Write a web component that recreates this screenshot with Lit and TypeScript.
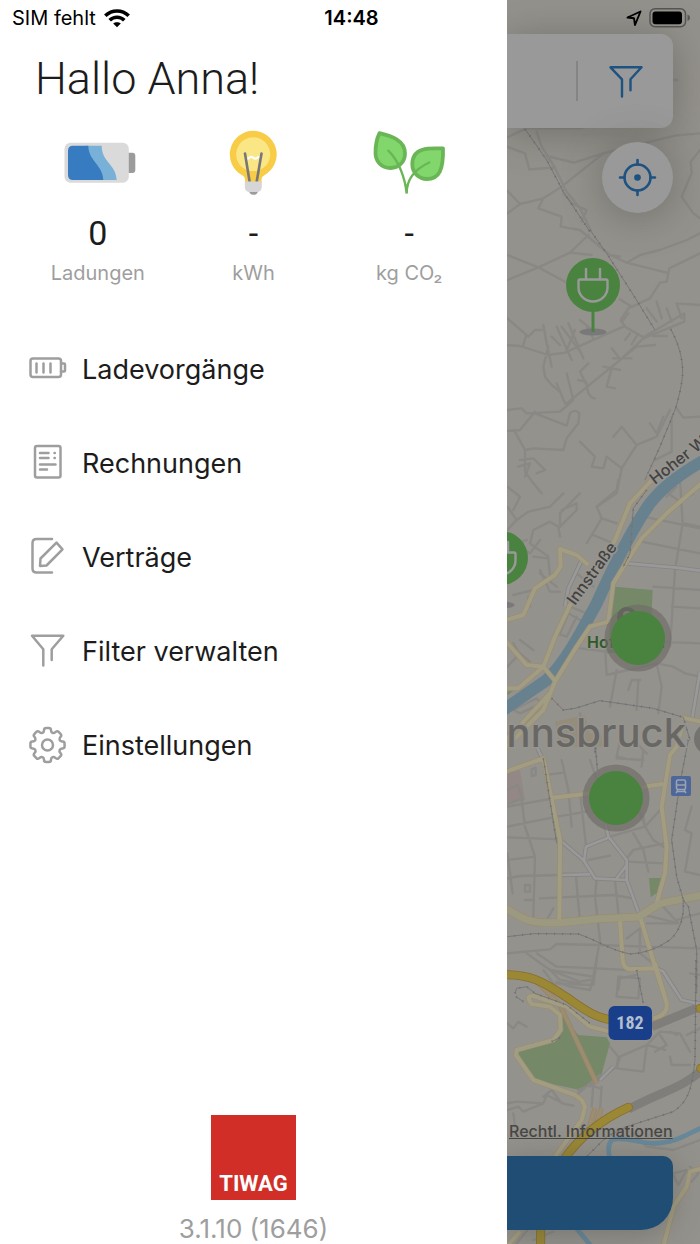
import { LitElement, html, css, svg } from "lit";
import { customElement } from "lit/decorators.js";

/* ---------- Map data: [top of sheet, path in sheet units (3 units = 1px)] ---------- */
type Line = [number, string];

const MINOR: Line[] = [
  [0, "M22,412L80,385H240L290,372M22,440L75,460L88,508L165,502L140,468L222,488L310,460L490,415L530,406L600,400M310,460L185,560L130,595L60,612L22,640M22,572L60,612M130,595L115,625L185,650L182,680L240,690M190,580L215,610L260,630L245,665M600,450L572,485L575,520L545,590L580,640L600,655M110,395L125,440L160,495L200,575L240,625L272,690M520,240h12"],
  [230, "M22,75L115,112L195,155M22,150L115,112L210,68L265,15M210,68L275,75M240,0L330,75L380,98L500,128M330,75L360,80M380,98L420,75L480,60L560,30L600,10M600,70L508,115L500,155L480,158L450,205L385,235L362,270L375,290L430,322M360,208L395,230M22,345L60,348L145,375L195,368L290,325L370,290M22,265L85,320L105,300H125M78,318L70,345M130,285L140,340L155,410M130,410L135,440L155,465L180,485M145,350L130,410M170,290L215,390M185,290L240,365M205,280L250,385M225,300L200,360M240,270L290,310M260,290L280,325M155,320L180,345"],
  [230, "M200,520L360,390L430,325L553,275V250L430,322M360,390L410,350L465,345M265,400L240,425L260,465M235,450L258,455L265,490Q275,505 285,505M335,355L355,380M340,385L395,385M310,410L360,420M335,415L320,470L345,475M22,540L65,535L80,550L180,545L220,510L200,430M195,520L170,460M105,545L60,600L22,603M105,550L200,587L210,550Q225,535 238,550L235,580L200,625L190,660L100,655L75,660L42,600M75,660V725L100,760L125,790M60,690L100,685L135,720L110,730M55,710L90,700L75,740M22,770L60,800L40,840M240,635L285,680L275,710L310,715L320,680L365,715L410,645L365,590L340,620M365,715L350,790L290,830M410,645L470,620L510,540M530,535L550,563L600,560M450,580L470,610L490,560M515,560V665L465,690M530,220L600,225M470,215l15,50M500,235l15,40M530,220l15,45M440,235l30,40M370,270l15,-20M390,310l-15,20M410,318l-15,25M460,318h40"],
  [480, "M22,80L50,120L85,95L150,80L190,40M50,120L22,150M185,90L230,70V90L180,140V100L240,40M100,150L150,125L175,140L180,170M100,150L90,190L145,230M120,180L90,220L60,200M22,200L80,180M100,230L145,235L150,290M120,270L150,335H180M120,280L170,320M100,330L40,345M85,350L90,380M260,190L305,115L350,130M305,115L290,80L350,30L355,0M280,165L340,190M230,280L280,320M180,460L205,400L240,420M210,380L260,400M170,460L200,470L230,410M40,490L70,540M60,480L100,510M22,560L60,520L90,545M425,185L600,220M540,0L548,130L525,270L510,500M430,110L600,145M460,320L600,330M515,380L600,385M480,485L600,490M315,500L320,585L470,550M350,570L330,680M385,630L395,600H420M415,600L410,690M470,550L485,620L475,700M470,550L520,560L555,580L600,590M240,505L320,515M370,230L430,110M550,130L600,140M490,30L540,65L580,40M500,50L530,20M40,690L110,655L125,670L60,700ZM240,700L250,770M22,760L60,740"],
  [740, "M22,200L160,175M22,260L170,230L260,215M22,292L180,298M22,360L105,350M22,415L60,408L180,405M65,180L75,260L105,350L100,530M22,340L38,460M185,60L205,150L215,260M150,103L190,98M240,160L258,315M350,55L430,60M360,0L350,50L375,55M270,60L290,120M430,30L425,80M400,0L440,40M22,150l30,-15l15,40l-40,15M95,88l12,-5v22l-12,3zM75,435h15v20h-15zM228,410L235,490L240,540M290,415L285,470L300,600M120,475L340,465L400,475M345,420L355,520M75,480H100M265,360L330,347M330,290L435,260L485,205M435,260L460,300L490,320M400,280L430,330L445,395M380,355L400,330L490,310M380,365L490,370M418,215L435,260M435,260L430,230M415,520L535,550L485,495M440,550H530M380,595L420,565V640L465,675M300,600L280,710L270,750M22,640L150,628L170,612L290,615L600,625M80,640L150,690L280,710M110,640L170,680L290,685L380,690M150,690L180,720L240,730M355,750L360,715L410,705M570,700L600,705M575,200L555,270L575,280L555,395L600,405M160,505L140,540M530,540L600,520"],
  [960, "M22,190L40,205L55,185L80,200M130,30L160,70L280,75M150,30L240,65L270,60M170,65L210,80L270,90M355,50L420,55L415,115L350,110ZM280,75L290,0M360,290L440,255L495,270M360,290L350,325L430,335M430,335L440,255L480,215M330,260L355,290L350,320L270,380M465,275L500,255L480,225M480,215L540,220L570,275M510,215L530,225M510,290L515,315H570M235,390L270,375L300,385M300,345L235,400M22,430L50,425L130,430L140,405L190,430M22,450L55,440L70,455L130,430M40,460L45,500M130,410L155,390L185,430L220,437M280,370L275,440M305,380L300,450M600,205L560,225M520,640l40,-10l-25,45l-15,-30M570,620l25,20l-20,25M400,520L440,560L520,570L600,540M90,800L50,850M100,840l60,-25"],
];

const WHITE: Line[] = [
  [480, "M380,250L530,263L600,272M245,240L205,325L195,380M600,575L575,725"],
  [740, "M100,0L130,60M180,300L250,360L285,415L380,420V360L325,290L316,250M328,292L258,320L252,362M180,405L270,403M380,420L415,515M380,375L350,415M470,685L490,695L525,750"],
  [960, "M470,25L490,35L545,120L590,130H610M340,320L300,360"],
];

const YELLOW: Line[] = [
  [480, "M470,-15L390,70L345,180L280,290L210,375L165,470L130,560L55,625H10M265,255L230,225L180,207L182,260L165,285L105,325L70,405L10,422M130,560L80,555L10,475M130,560L165,602M610,5L500,100L425,175L380,245L340,310L325,425L270,440L230,500L165,605L130,690L10,810M150,640L10,790M545,712L610,727"],
  [740, "M550,-50L530,20L510,45L485,200L500,320L495,400L470,490M10,98L130,55L180,300L178,545M160,173L270,160M425,141L490,132M360,540L368,660Q370,685 390,688L465,685M420,530L465,680L492,765"],
  [960, "M465,10L500,130Q505,165 460,175M165,590L245,480L255,440L245,420L225,405L100,360L48,285L50,270L160,240L182,210L180,165L150,140L95,132Q75,105 100,108L200,140L270,200L330,215M490,860L520,740L560,680L570,635L605,625M20,860L60,815"],
];

const YELLOW_WIDE: Line[] = [
  [740, "M10,502C60,528 80,548 130,548H180L300,536L415,531L480,490L610,465"],
];

const RAIL: Line[] = [
  [0, "M75,387L140,480L190,575L270,695"],
  [230, "M270,0L320,70L400,195L465,300M512,297C535,340 548,380 548,430C545,480 525,540 525,540L480,650L435,750"],
  [480, "M440,30L400,85L390,220L370,260M155,655L190,690L225,685L300,662L460,685L550,712L570,780M285,790V820"],
  [740, "M565,0L540,130L515,300L530,410L550,480Q555,560 510,600Q450,640 390,642C330,630 290,600 235,582L100,581L22,590M550,480L565,500L590,630V760M130,55L170,310M285,0L292,90M410,690L430,790"],
  [960, "M588,0L585,300C575,380 570,420 520,455L380,500L320,530L250,600M45,100L50,85L80,80L105,100L200,135L270,190M48,110L70,125M155,245L185,230"],
];

const draw = (cls: string, lines: Line[]) =>
  lines.map(([top, d]) => svg`<path class=${cls} transform="translate(500 ${top}) scale(.33333)" d=${d}></path>`);

const plugPin = (x: number, y: number) => svg`
  <ellipse cx=${x} cy=${y + 47} rx="13.5" ry="3.5" fill="#797979"></ellipse>
  <path d="M${x},${y + 26}v21" stroke="#4a8340" stroke-width="3"></path>
  <circle cx=${x} cy=${y} r="27" fill="#4a8340"></circle>
  <g fill="none" stroke="#999" stroke-width="2.4" stroke-linecap="round" stroke-linejoin="round">
    <path d="M${x - 7},${y - 6}v-10M${x + 7},${y - 6}v-10"></path>
    <path d="M${x - 13},${y - 5.5}h26q1.5,0 1.5,1.5v6.500a14.500,14 0 0 1 -29,0v-6.500q0,-1.500 1.500,-1.500z"></path>
  </g>`;

const clusterDot = (x: number, y: number) => svg`
  <circle cx=${x} cy=${y} r="33.500" fill="#6e6b69" fill-opacity=".65"></circle>
  <circle cx=${x} cy=${y} r="27" fill="#4a8340"></circle>`;

@customElement("city-map")
class CityMap extends LitElement {
  static styles = css`
    :host { display: block; }
    .map { display: block; width: 100%; height: 100%; background: #94928c; }
    path { fill: none; stroke-linejoin: round; }
    .minor { stroke: #898885; stroke-width: 7; stroke-linecap: round; }
    .white-case { stroke: #858481; stroke-width: 13; }
    .white-road { stroke: #9a9999; stroke-width: 8; }
    .yellow-case { stroke: #9d8b70; stroke-width: 16; }
    .yellow-road { stroke: #a19d83; stroke-width: 12; }
    .wide-case { stroke: #9d8b70; stroke-width: 25; }
    .wide-road { stroke: #9b9a80; stroke-width: 21; }
    .river { stroke: #67828e; stroke-width: 36; }
    .stream { stroke: #68889a; stroke-width: 14; }
    .covered { stroke: #7f7e7b; stroke-width: 26; }
    .gold-case { stroke: #8b6d2f; stroke-width: 27; stroke-linecap: round; }
    .gold { stroke: #9a8835; stroke-width: 22; stroke-linecap: round; }
    .track-case { stroke: #9d8265; stroke-width: 15; }
    .track { stroke: #9a8d70; stroke-width: 11; }
    .rail { stroke: #777678; stroke-width: 3; }
    .ties { stroke: #706f70; stroke-width: 6; stroke-dasharray: 3 21; }
    .park { fill: #758969; }
    .street { font: 500 16px Inter, sans-serif; fill: #424242; stroke: #96948f; stroke-width: 3px; paint-order: stroke; }
    .place { font: 600 16px Inter, sans-serif; fill: #2e5a26; stroke: #96948f; stroke-width: 2px; paint-order: stroke; }
    .city { font: 500 40px Inter, sans-serif; fill: #686764; stroke: #96948f; stroke-width: 3px; paint-order: stroke; }
    .shield { font: 700 18px "Roboto Condensed", Roboto, sans-serif; fill: #b4bfd0; }
  `;

  render() {
    const lakes: Line[] = [[480, "M345,320L458,330L450,520H320ZM22,635L40,633L22,645Z"], [740, "M447,414H484L470,460L452,471Z"],
      [960, "M52,275L160,240L185,215L180,150L195,155L210,195L235,225L320,232L330,250L300,360L240,390L100,360Z"]];
    const river: Line[] = [[480, "M640,-75C540,-20 490,20 450,70C400,140 340,260 290,370C230,480 190,555 140,600L0,697"]];
    const stream: Line[] = [[960, "M340,640L332,600Q318,562 335,540C370,528 420,550 460,550C530,550 560,520 610,502M225,800L275,860"]];
    const covered: Line[] = [[960, "M455,200L600,140M385,448C480,395 550,385 610,325"]];
    const track: Line[] = [[960, "M110,65L180,135L290,370M285,445L262,520M305,445L285,500"]];
    const gold: Line[] = [[960, "M0,45C100,38 150,80 200,112C250,146 280,172 340,180M190,600C240,530 300,480 385,442M600,145h20M602,325l20,-10M122,800V860"]];
    return html`
      <svg class="map" viewBox="507 0 193 1244" preserveAspectRatio="xMinYMin slice" role="img" aria-label="Innsbruck">
        <path transform="translate(500 480) scale(.33333)" style="fill:#958d7b" d="M165,725L255,705L270,760L330,770V800H180Z"></path>
        <path transform="translate(500 740) scale(.33333)" style="fill:#938885" d="M22,95L60,90L75,180L22,195Z"></path>
        ${draw("park", lakes)}
        ${draw("minor", MINOR)}
        ${draw("covered", covered)}
        ${draw("river", river)}
        ${draw("stream", stream)}
        ${draw("white-case", WHITE)}${draw("white-road", WHITE)}
        ${draw("track-case", track)}${draw("track", track)}
        ${draw("yellow-case", YELLOW)}${draw("wide-case", YELLOW_WIDE)}
        ${draw("yellow-road", YELLOW)}${draw("wide-road", YELLOW_WIDE)}
        ${draw("gold-case", gold)}${draw("gold", gold)}
        ${draw("rail", RAIL)}${draw("ties", RAIL)}
        <text class="street" transform="translate(655 485) rotate(-38)">Hoher Weg</text>
        <text class="street" transform="translate(575 606) rotate(-54)">Innstraße</text>
        <text class="place" x="587" y="648">Hofgarten</text>
        <text class="city" x="686" y="747" text-anchor="end">Innsbruck</text>
        <circle cx="627" cy="617" r="10" fill="#4d5d49"></circle>
        <circle cx="627" cy="615" r="4" fill="#949b90"></circle>
        <circle cx="710" cy="739" r="16" fill="#75736f"></circle>
        ${plugPin(593, 285)}
        ${plugPin(501, 558)}
        ${clusterDot(638, 638)}
        ${clusterDot(616, 798)}
        <rect x="671" y="776" width="20" height="20" rx="2" fill="#4c6798"></rect>
        <g fill="none" stroke="#9aa3b3" stroke-width="1.600">
          <rect x="676.500" y="780" width="9" height="9.500" rx="1.500"></rect>
          <path d="M676.500,785h9M678,790l-2,3M684,790l2,3M677,791.500h8"></path>
        </g>
        <rect x="608.500" y="1006" width="43.500" height="34" rx="6" fill="#193f8b"></rect>
        <text class="shield" x="630" y="1029" text-anchor="middle">182</text>
      </svg>`;
  }
}

/* Outline of an eight-toothed cog with softened corners. */
const cogPath = (cx: number, cy: number) => {
  const pts: [number, number][] = [];
  for (let i = 0; i < 8; i++)
    for (const [r, a] of [[13.2, -16], [17.4, -11], [17.4, 11], [13.2, 16]]) {
      const t = ((i * 45 + a - 90) * Math.PI) / 180;
      pts.push([cx + r * Math.cos(t), cy + r * Math.sin(t)]);
    }
  const toward = (p: number[], q: number[], by: number) => {
    const k = Math.min(by / Math.hypot(q[0] - p[0], q[1] - p[1]), 0.5);
    return `${(p[0] + (q[0] - p[0]) * k).toFixed(2)},${(p[1] + (q[1] - p[1]) * k).toFixed(2)}`;
  };
  return pts.map((p, i) => {
    const prev = pts[(i + 31) % 32], next = pts[(i + 1) % 32];
    return `${i ? "L" : "M"}${toward(p, prev, 2)}Q${p[0].toFixed(2)},${p[1].toFixed(2)} ${toward(p, next, 2)}`;
  }).join("") + "Z";
};

const MENU = [
  { label: "Ladevorgänge", icon: svg`<rect x="2.500" y="9.500" width="30.500" height="18.500" rx="2.500"></rect><path d="M33,14.500h3q1,0 1,1v6q0,1 -1,1h-3M8.500,14.500v9M15.500,14.500v9M22.500,14.500v9"></path>` },
  { label: "Rechnungen", icon: svg`<rect x="7" y="3" width="25.500" height="31.500" rx="2"></rect><path d="M12,10h8.500M26.500,10h.3M12,15h8.500M26.500,15h.3M12,21.500h15.500M12,26.500h7"></path>` },
  { label: "Verträge", icon: svg`<path d="M24,2H8.500Q4.500,2 4.500,6V31.500Q4.500,35.500 8.500,35.500H24M28.500,5.700L34.500,12.300L18.500,28.500L12,29L12.500,21.500Z"></path>` },
  { label: "Filter verwalten", icon: svg`<path d="M15.300,34.500V18.300L4,4.700H35.300L23.700,18.300V29"></path>` },
  { label: "Einstellungen", icon: svg`<path d=${cogPath(19.5, 20)}></path><circle cx="19.500" cy="20" r="5.500"></circle>` },
];

const STATS = [
  { value: "0", label: "Ladungen", icon: svg`
    <rect x="64" y="22.700" width="13.300" height="20.300" rx="3" fill="#9b9b9b"></rect>
    <rect x="6.500" y="12.700" width="64.300" height="40" rx="6" fill="#dadada"></rect>
    <path fill="#79b0d8" d="M28,15.700H43.700C43.500,32 58,34 58.700,50H40Z"></path>
    <path fill="#377bc0" d="M15,15.700H30.300C30.500,31 45,35 45.300,50H15Q10,50 10,45V20.700Q10,15.700 15,15.700Z"></path>` },
  { value: "-", label: "kWh", icon: svg`
    <path fill="#f8cc46" d="M40.200,.7a23.700,23.700 0 0 1 11.500,44.300q-3,1.500 -3.200,4v4h-16.500v-4q-.2,-2.500 -3.200,-4a23.700,23.700 0 0 1 11.400,-44.300z"></path>
    <path fill="#fae684" d="M37,41a17,17 0 1 1 6.400,0z"></path>
    <path fill="none" stroke="#fff" stroke-width="2.200" d="M32.500,28q2,1.500 3.800,-.3q2,-1.800 4,0q2,1.800 4,0q2,-1.800 4,.3"></path>
    <path fill="none" stroke="#777" stroke-width="2.600" stroke-linecap="round" d="M32,23.500L36.500,51M48.500,23.500L43.800,51"></path>
    <path fill="#9b9b9b" d="M36,60h9q0,4.800 -4.500,4.800t-4.500,-4.800z"></path>
    <path fill="#d6d6d6" d="M31.800,51.500h17v5q0,5.500 -5.500,5.500h-6q-5.500,0 -5.500,-5.500z"></path>` },
  { value: "-", label: "kg CO₂", icon: svg`
    <g stroke="#6ab656" stroke-width="3.800" fill="#82d76c" stroke-linejoin="round">
      <path d="M10.500,3.200C22,6 36,10 36,23.500C36,32 29.500,38 21.500,38C12,38 6.500,31 6.500,23C6.500,16 7.500,9 10.500,3.200Z"></path>
      <path d="M74,18.500C62,18 43.300,16.500 43.300,34C43.300,43 50,49 58,49C70,49 74.500,40 74,18.500Z"></path>
    </g>
    <path fill="none" stroke="#6ab656" stroke-width="2.400" stroke-linecap="round" d="M19.300,20.700C30,31 36,48 37.700,63.500C37.500,50 44,40 60.300,32.500"></path>` },
];

@customElement("app-root")
class AppRoot extends LitElement {
  static styles = css`
    :host { display: block; font-family: Inter, "Liberation Sans", sans-serif; color: #1c1c1c; }
    * { box-sizing: border-box; }
    button { font: inherit; color: inherit; background: none; border: 0; padding: 0; margin: 0; cursor: pointer; }
    .screen { position: relative; display: grid; grid-template-columns: 507fr 193fr; min-height: 100vh; background: #fff; }

    .status { position: absolute; top: 0; left: 0; right: 0; z-index: 2; display: grid; grid-template-columns: 1fr auto 1fr; align-items: center; height: 36px; padding: 0 9px 0 12px; color: #000; font-size: 20px; pointer-events: none; }
    .status-side { display: flex; align-items: center; gap: 8px; }
    .status-side.right { justify-content: flex-end; gap: 6px; }
    .time { font-weight: 600; }

    .drawer { display: flex; flex-direction: column; min-width: 0; padding-top: 53px; background: #fff; }
    .greeting { margin: 0; padding: 0 35px; font: 300 45px/52px Roboto, sans-serif; }
    .stats { display: grid; grid-template-columns: repeat(3, 1fr); margin: 25px 20px 0; padding: 0; list-style: none; }
    .stat { display: flex; flex-direction: column; align-items: center; }
    .stat svg { width: 80px; height: 66px; }
    .value { margin-top: 17px; font: 400 34px/40px Roboto, sans-serif; }
    .unit { margin-top: 8px; font-size: 20px; line-height: 24px; color: #9e9e9e; }

    .menu { display: flex; flex-direction: column; margin-top: 37px; }
    .entry { display: flex; align-items: center; gap: 14px; height: 94px; padding: 0 28px; text-align: left; font-size: 27px; }
    .entry svg { flex: none; width: 40px; height: 40px; fill: none; stroke: #9e9e9e; stroke-width: 2.5; stroke-linecap: round; stroke-linejoin: round; }

    .about { display: flex; flex-direction: column; align-items: center; margin-top: auto; }
    .logo { display: flex; align-items: flex-end; justify-content: center; width: 85px; height: 85px; padding-bottom: 2px; background: #d12e28; color: #fff; font: 700 22px/28px Roboto, sans-serif; }
    .version { margin: 14px 0 0; font-size: 26px; line-height: 30px; color: #9e9e9e; }

    .behind { position: relative; display: flex; flex-direction: column; align-items: flex-end; min-width: 0; padding: 34px 27px 14px 0; overflow: hidden; background: #94928c; }
    .backdrop { position: absolute; inset: 0; }
    .search { position: relative; display: flex; align-items: center; justify-content: flex-end; gap: 30px; width: 100%; height: 94px; padding-right: 29px; border-radius: 0 12px 12px 0; background: #999; box-shadow: 0 4px 40px rgba(60, 60, 55, .4); }
    .divider { width: 2px; height: 40px; background: #848484; }
    .filter svg { display: block; width: 36px; height: 36px; fill: none; stroke: #1e5280; stroke-width: 2.4; stroke-linecap: round; stroke-linejoin: round; }
    .locate { position: relative; width: 71px; height: 71px; margin-top: 14px; border-radius: 50%; background: #999; box-shadow: 0 4px 40px rgba(60, 60, 55, .4); }
    .locate svg { display: block; width: 71px; height: 71px; fill: none; stroke: #1e5280; stroke-width: 2.6; stroke-linecap: round; }
    .legal { position: relative; align-self: flex-start; margin: auto 0 0 2px; font-size: 16px; font-weight: 500; line-height: 20px; white-space: nowrap; color: #484744; }
    .action { position: relative; width: 100%; height: 74px; margin-top: 15px; border-radius: 0 10px 32px 0; background: #1f4d73; box-shadow: 0 4px 30px rgba(60, 60, 55, .35); }
  `;

  render() {
    return html`
      <div class="screen">
        <div class="status">
          <div class="status-side">
            <span>SIM fehlt</span>
            <svg width="26" height="19" viewBox="0 0 26 19" fill="none" stroke="#000" stroke-width="3.600">
              <path d="M1.300,6.800C8,.3 18,.3 24.700,6.800"></path>
              <path d="M5.700,11.300C9.800,7.300 16.200,7.300 20.300,11.300"></path>
              <path d="M13,18.300L9.200,14.400C11.200,12.700 14.800,12.700 16.800,14.400Z" fill="#000" stroke="none"></path>
            </svg>
          </div>
          <span class="time">14:48</span>
          <div class="status-side right">
            <svg width="18" height="18" viewBox="0 0 18 18" fill="none" stroke="#000" stroke-width="1.900" stroke-linejoin="round">
              <path d="M15.500,2.500L2.500,8.500L9,9.300L10,16Z"></path>
            </svg>
            <svg width="42" height="20" viewBox="0 0 42 20">
              <rect x="1" y=".8" width="35.500" height="18" rx="5" fill="none" stroke="#555452" stroke-width="1.500"></rect>
              <rect x="3.500" y="3.400" width="29.500" height="12.800" rx="3" fill="#000"></rect>
              <path d="M38.500,6.500q2.500,1 2.500,3.300t-2.500,3.300z" fill="#555452"></path>
            </svg>
          </div>
        </div>

        <aside class="drawer">
          <h1 class="greeting">Hallo Anna!</h1>
          <ul class="stats">
            ${STATS.map((s) => html`
              <li class="stat">
                <svg viewBox="0 0 80 66" aria-hidden="true">${s.icon}</svg>
                <span class="value">${s.value}</span>
                <span class="unit">${s.label}</span>
              </li>`)}
          </ul>
          <nav class="menu">
            ${MENU.map((m) => html`
              <button class="entry" type="button">
                <svg viewBox="0 0 40 40" aria-hidden="true">${m.icon}</svg>
                <span>${m.label}</span>
              </button>`)}
          </nav>
          <footer class="about">
            <div class="logo">TIWAG</div>
            <p class="version">3.1.10 (1646)</p>
          </footer>
        </aside>

        <main class="behind">
          <city-map class="backdrop"></city-map>
          <div class="search">
            <span class="divider"></span>
            <button class="filter" type="button" aria-label="Filter">
              <svg viewBox="0 0 36 36"><path d="M14,33.500V16.300L2.500,4.300H33.500L22.500,16.300V27.300"></path></svg>
            </button>
          </div>
          <button class="locate" type="button" aria-label="Standort">
            <svg viewBox="0 0 71 71">
              <circle cx="35.500" cy="35.500" r="13"></circle>
              <circle cx="35.500" cy="35.500" r="3.300" fill="#1e5280" stroke="none"></circle>
              <path d="M35.500,18v4.500M35.500,48.500v4.500M18,35.500h4.500M48.500,35.500h4.500"></path>
            </svg>
          </button>
          <a class="legal" href="#legal">Rechtl. Informationen</a>
          <button class="action" type="button" aria-label="Laden"></button>
        </main>
      </div>`;
  }
}
